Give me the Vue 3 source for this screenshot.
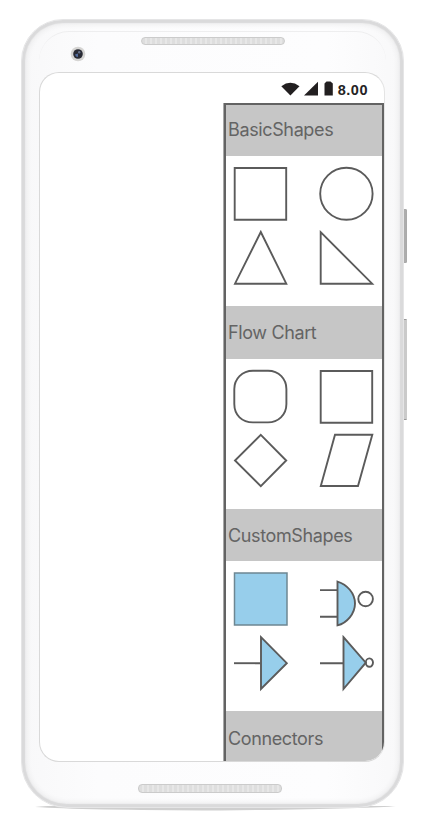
<script setup>
const sections = [
  { title: 'BasicShapes', shapes: ['square', 'circle', 'triangle', 'rightTriangle'] },
  { title: 'Flow Chart', shapes: ['rounded', 'square', 'diamond', 'parallelogram'] },
  { title: 'CustomShapes', shapes: ['blueSquare', 'nand', 'buffer', 'inverter'] },
  { title: 'Connectors', shapes: [] },
]

const paths = {
  square: [{ d: 'M1.7 1H53.2V52.7H1.7Z' }],
  circle: [{ d: 'M1.2 26.7A26.2 26 0 0 1 53.6 26.7A26.2 26 0 0 1 1.2 26.7Z' }],
  triangle: [{ d: 'M27.8 1L53.3 52.7H2Z' }],
  rightTriangle: [{ d: 'M1.7 1.2L53.2 52.7H1.7Z' }],
  rounded: [{ d: 'M20 .8H35C46 .8 53.4 9 53.4 19V34C53.4 45 45 52.4 35 52.4H20C9 52.4 1.3 45 1.3 34V19C1.3 9 9 .8 20 .8Z' }],
  diamond: [{ d: 'M27.8 .8L53.2 26.5L27.8 52.2L2 26.5Z' }],
  parallelogram: [{ d: 'M16 .8H53.3L39 52H1.8Z' }],
  blueSquare: [{ d: 'M1.5 .9H54V53.1H1.5Z', fill: true, thin: true }],
  nand: [
    { d: 'M1 18.1H18M1 44.8H18' },
    { d: 'M18.5 9.6C28 12.6 36 21 36 31.5C36 41.5 28 51 18.5 53.3Z', fill: true },
    { d: 'M39.3 27A7.3 7.3 0 0 1 53.9 27A7.3 7.3 0 0 1 39.3 27Z' },
  ],
  buffer: [{ d: 'M1 27.2H27.5' }, { d: 'M28 1.2L53.8 27.2L28 53Z', fill: true }],
  inverter: [
    { d: 'M1 27.2H24' },
    { d: 'M24.5 1.2L46.8 26.7L24.5 53Z', fill: true },
    { d: 'M46.8 26.6A3.6 4.2 0 0 1 54 26.6A3.6 4.2 0 0 1 46.8 26.6Z' },
  ],
}
</script>

<template>
  <main class="stage">
    <svg class="shadow" viewBox="0 0 370 10"><path d="M0 5Q20 2 185 3T361 4Q335 7 185 8.5Q45 8 0 5Z" /></svg>
    <i class="side-button power"></i>
    <i class="side-button volume"></i>
    <section class="phone">
      <div class="top-bezel">
        <svg class="camera" viewBox="0 0 16 16">
          <circle cx="8" cy="8" r="7.3" fill="#d6d5d3" />
          <circle cx="8" cy="8" r="4.8" fill="#292b35" />
          <path d="M5 8.5L8 7.5L8 11Q5.5 11 5 8.5Z" fill="#526b9d" />
          <circle cx="9.2" cy="6.2" r="1.2" fill="#65708b" />
        </svg>
        <div class="speaker"></div>
      </div>
      <div class="screen">
        <header class="status">
          <svg class="icons" viewBox="0 0 53 16">
            <path d="M.3 5.2Q9.3-1.5 18.5 5.2L9.4 14.5Z" />
            <path d="M23 14.5L37 .8V14.5Z" />
            <path d="M43.5 2.5L45.5 .5H49.5L51.8 2.5V14.5H43.5Z" />
          </svg>
          <span>8.00</span>
        </header>
        <div class="palette">
          <section v-for="section in sections" :key="section.title" class="group">
            <h2>{{ section.title }}</h2>
            <div v-if="section.shapes.length" class="shapes">
              <svg v-for="shape in section.shapes" :key="shape" viewBox="0 0 54 54">
                <path
                  v-for="part in paths[shape]"
                  :key="part.d"
                  :d="part.d"
                  :class="{ filled: part.fill, thin: part.thin }"
                />
              </svg>
            </div>
          </section>
        </div>
      </div>
      <div class="bottom-bezel"><div class="speaker"></div></div>
    </section>
  </main>
</template>

<style>
body { margin: 0; background: #fff; }
</style>

<style scoped>
* { box-sizing: border-box; }
.stage { position: relative; width: 428px; height: 828px; padding: 19px 0 0 21px; overflow: hidden; background: #fff; }
.shadow { position: absolute; left: 35px; top: 802px; width: 370px; height: 10px; fill: #cfcfcf; }
.phone {
  position: relative;
  width: 383px;
  height: 789px;
  padding: 2px 17px 0 17px;
  border: 1px solid #e5e5e6;
  border-radius: 42px 42px 46px 46px;
  background: linear-gradient(90deg, #f8f8f9, #fcfcfd 20%, #fdfdfe 80%, #f8f8f9);
  box-shadow: inset 0 0 1px 3px #dadadb, inset 0 0 6px 3px #e2e2e3;
}
.phone::before { content: ""; position: absolute; left: 17px; right: 17px; top: 11px; height: 30px; border-top: 1px solid #eeeeef; border-radius: 30px 30px 0 0; }
.side-button { position: absolute; left: 402px; width: 5px; border: 1px solid #aaa; border-radius: 1px; }
.power { top: 209px; height: 54px; background: #adadad; }
.volume { top: 319px; height: 101px; background: #cacaca; border-color: #999 #cacaca; }
.top-bezel { display: flex; height: 50px; padding: 15px 0 0 31px; }
.camera { width: 16px; height: 16px; margin-top: 9px; }
.speaker { width: 144px; height: 8px; border: 1px solid #cbcbcb; border-radius: 4px; background: repeating-linear-gradient(90deg, #dedede 0 3px, #e7e7e7 3px 5px); }
.top-bezel .speaker { margin-left: 55px; }
.bottom-bezel { padding: 22px 0 0 99px; }
.bottom-bezel .speaker { height: 9px; }
.screen { width: 346px; height: 690px; border: 1px solid #d9d9d9; border-right-color: #e4e4e4; border-radius: 20px; overflow: hidden; background: #fff; }
.status { display: flex; height: 30px; justify-content: flex-end; align-items: flex-start; padding: 8px 16px 0 0; font: 700 14.5px/18px "Liberation Sans", sans-serif; letter-spacing: .5px; color: #252324; }
.icons { width: 53px; height: 16px; margin-right: 4px; fill: #221f20; }
.palette { width: 160px; height: 660px; margin-left: auto; border: 2px solid #636363; border-bottom: 0; box-shadow: -1px 0 #a8a8a8; background: #fff; overflow: hidden; }
.group { height: 202.7px; }
.group h2 { height: 52.7px; margin: 0; padding: 0 0 0 2px; background: #c6c6c6; color: #646464; font: 400 18px/54px Inter, sans-serif; letter-spacing: -.37px; white-space: nowrap; }
.group:first-child { height: 201px; }
.group:first-child h2 { height: 51px; line-height: 50px; }
.group:last-child h2 { line-height: 55px; }
.shapes { display: grid; grid-template-columns: 54px 54px; grid-auto-rows: 54px; column-gap: 32px; row-gap: 10px; height: 150px; padding: 11px 0 0 7px; }
.shapes svg { width: 54px; height: 54px; overflow: visible; }
.shapes path { fill: none; stroke: #5b5b5b; stroke-width: 1.9; }
.shapes .filled { fill: #97ceeb; }
.shapes .thin { stroke: #6e8792; stroke-width: 1.5; }
</style>
